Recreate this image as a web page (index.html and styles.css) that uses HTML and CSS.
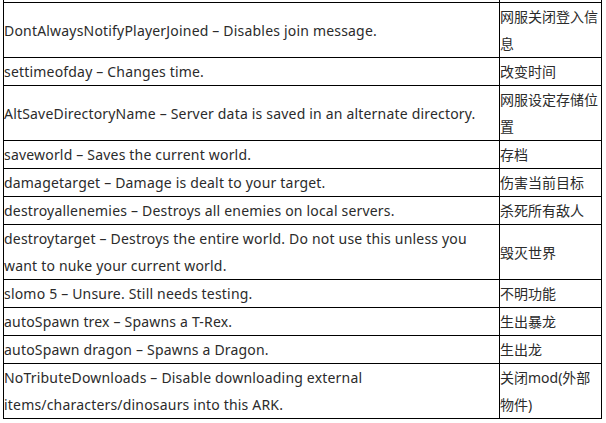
FILE: index.html
```html
<!DOCTYPE html>
<html lang="zh-CN">
<head>
<meta charset="utf-8">
<title>ARK commands</title>
<link rel="stylesheet" href="styles.css">
</head>
<body>
<table class="cmds">
  <colgroup><col class="c-en"><col class="c-zh"></colgroup>
  <tr class="stub"><td></td><td></td></tr>
  <tr><td class="en">DontAlwaysNotifyPlayerJoined – Disables join message.</td><td>网服关闭登入信息</td></tr>
  <tr><td class="en">settimeofday – Changes time.</td><td>改变时间</td></tr>
  <tr><td class="en">AltSaveDirectoryName – Server data is saved in an alternate directory.</td><td>网服设定存储位置</td></tr>
  <tr><td class="en">saveworld – Saves the current world.</td><td>存档</td></tr>
  <tr><td class="en">damagetarget – Damage is dealt to your target.</td><td>伤害当前目标</td></tr>
  <tr><td class="en">destroyallenemies – Destroys all enemies on local servers.</td><td>杀死所有敌人</td></tr>
  <tr><td class="en">destroytarget – Destroys the entire world. Do not use this unless you want to nuke your current world.</td><td>毁灭世界</td></tr>
  <tr><td class="en">slomo 5 – Unsure. Still needs testing.</td><td>不明功能</td></tr>
  <tr><td class="en">autoSpawn trex – Spawns a T-Rex.</td><td>生出暴龙</td></tr>
  <tr><td class="en">autoSpawn dragon – Spawns a Dragon.</td><td>生出龙</td></tr>
  <tr><td class="en">NoTributeDownloads – Disable downloading external items/characters/dinosaurs into this ARK.</td><td>关闭mod(外部物件)</td></tr>
</table>
</body>
</html>
```
FILE: styles.css
```css
html, body {
  margin: 0;
  padding: 0;
  background: #fff;
}
body {
  padding-left: 3px;
}
.cmds {
  border-collapse: collapse;
  table-layout: fixed;
  width: 598px;
  font-family: "Noto Sans", "Noto Sans CJK SC", sans-serif;
  font-size: 14px;
  line-height: 27px;
  color: #2b2b2b;
}
.c-en { width: 496px; }
.c-zh { width: 102px; }
.cmds td {
  border: 1px solid #000;
  padding: 0;
  vertical-align: middle;
}
.cmds td.en {
  letter-spacing: 0.19px;
}
.cmds .stub td {
  border-top: none;
  height: 2px;
  line-height: 0;
}
```
